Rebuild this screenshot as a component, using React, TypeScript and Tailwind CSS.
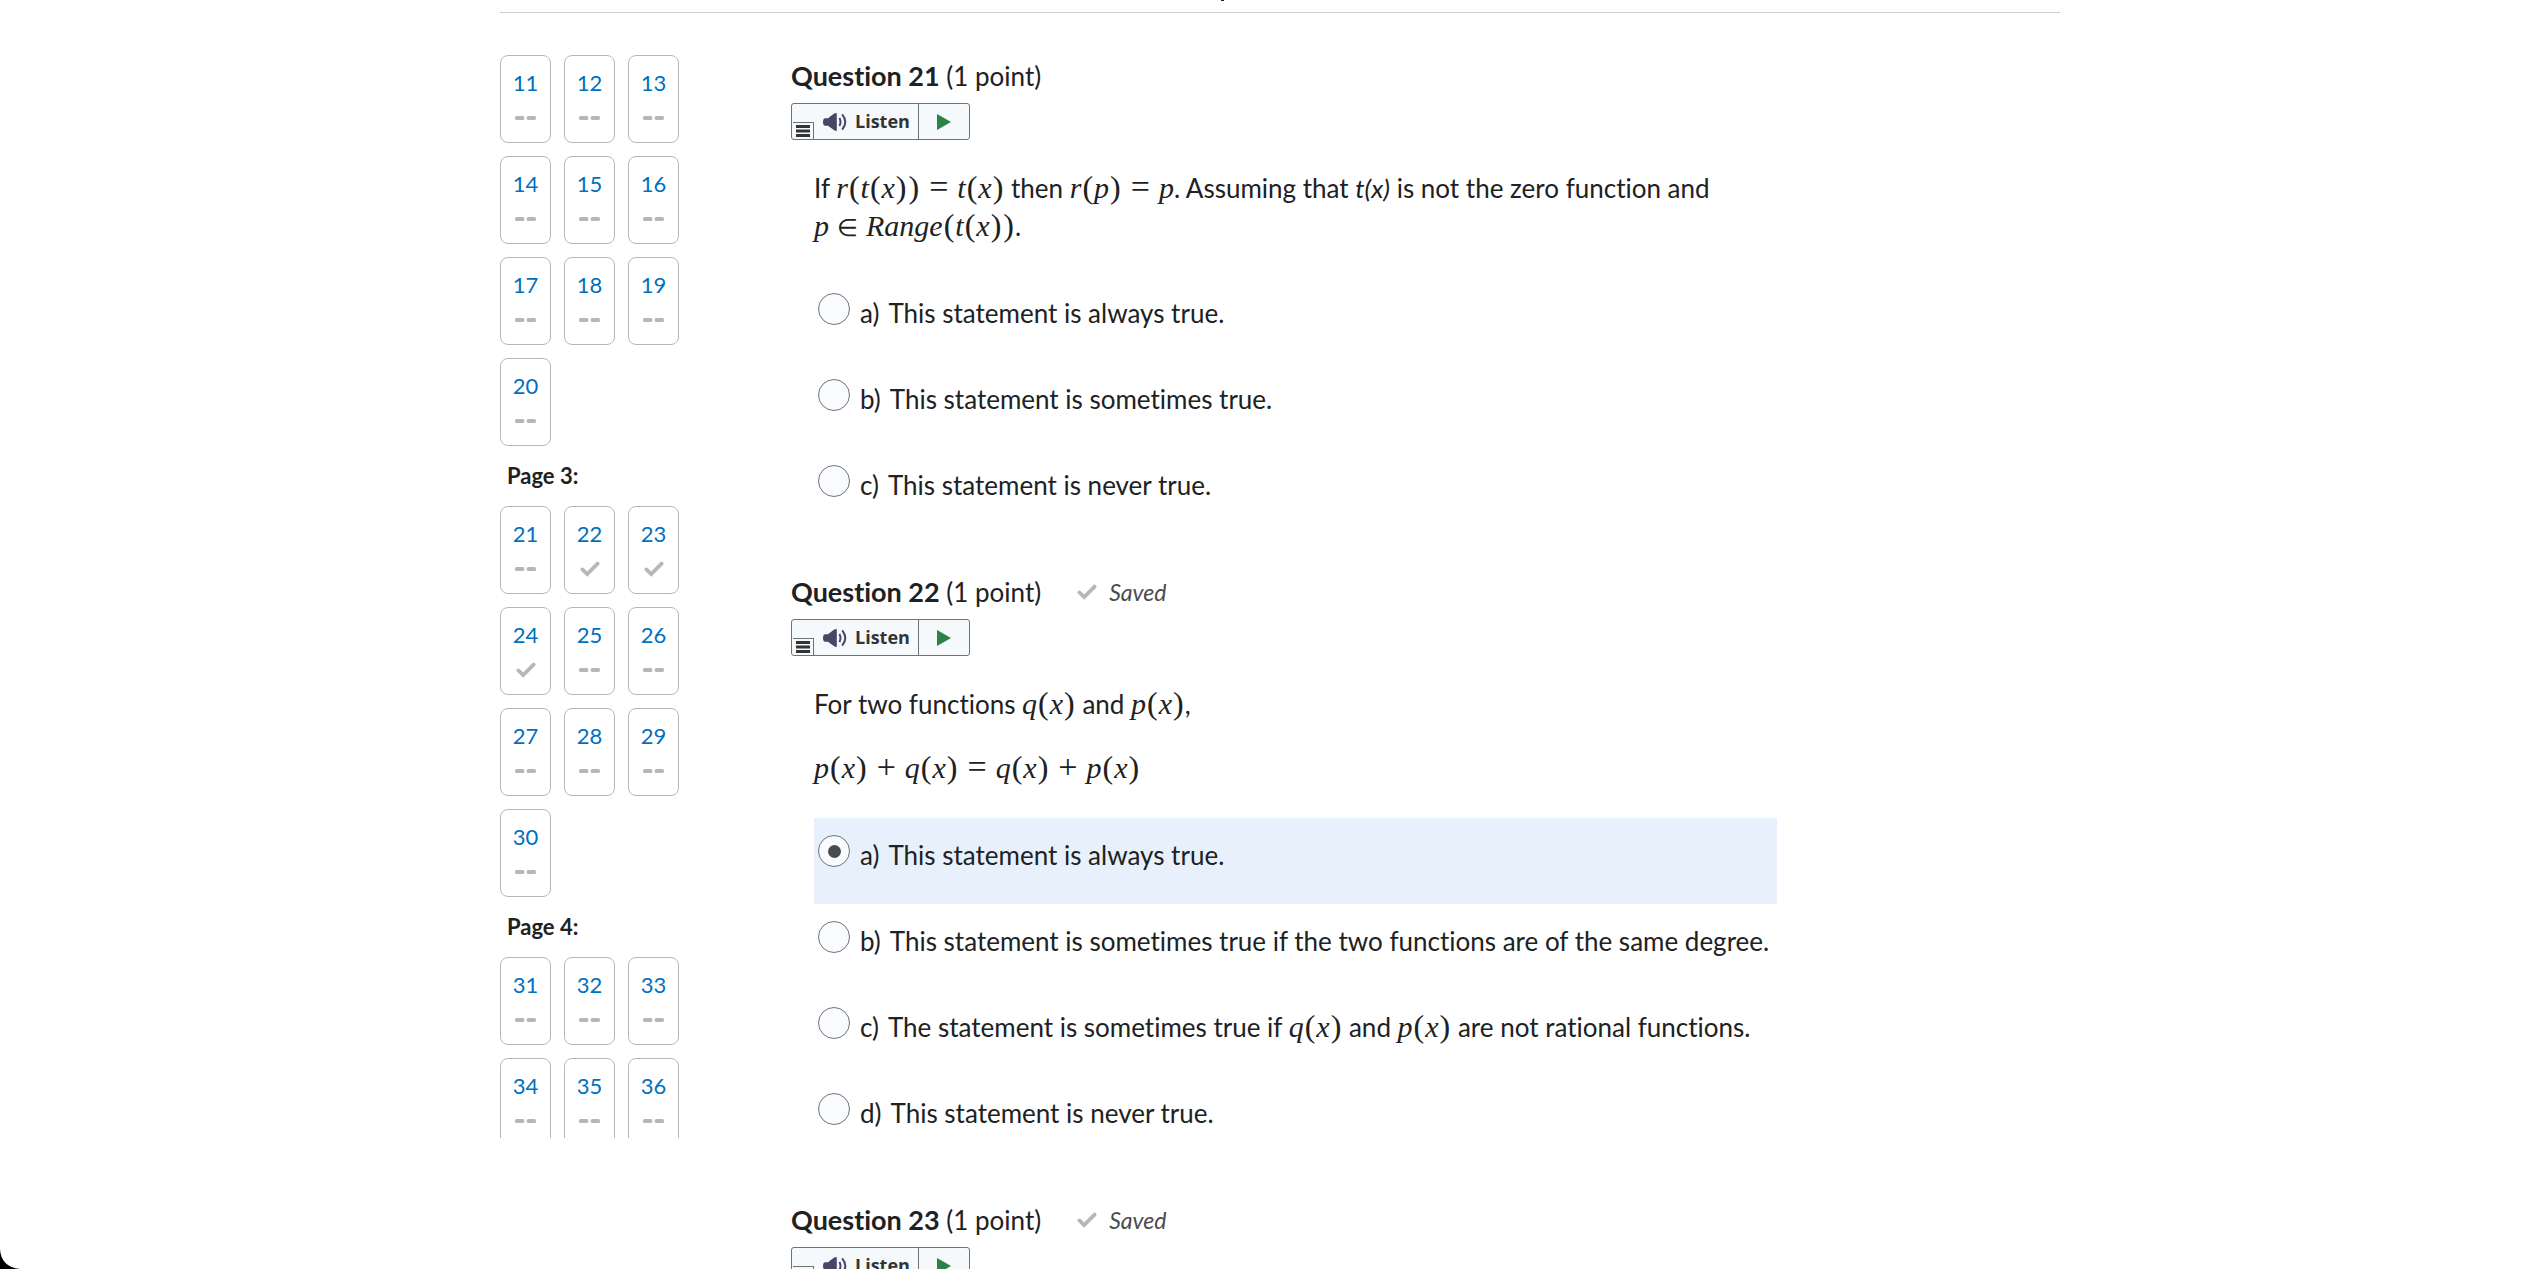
import { useState } from "react";
import type { ReactNode } from "react";

type CellState = "empty" | "saved";

const navSections: { title: string | null; from: number; to: number }[] = [
  { title: null, from: 11, to: 20 },
  { title: "Page 3:", from: 21, to: 30 },
  { title: "Page 4:", from: 31, to: 36 },
];

const savedQuestions = [22, 23, 24];

function CheckIcon({ className }: { className?: string }) {
  return (
    <svg viewBox="0 0 20 16" className={className} aria-hidden="true">
      <path
        d="M2.4 8.4 7.2 13 17.6 2.6"
        fill="none"
        stroke="#b1b9be"
        strokeWidth="3.8"
        strokeLinecap="round"
      />
    </svg>
  );
}

function DashIcon() {
  return (
    <svg viewBox="0 0 21 4" className="h-1 w-[21px]" aria-hidden="true">
      <rect x="0" y="0" width="9.3" height="4" rx="1.5" fill="#b1b9be" />
      <rect x="11.7" y="0" width="9.3" height="4" rx="1.5" fill="#b1b9be" />
    </svg>
  );
}

function NavCell({ number, state }: { number: number; state: CellState }) {
  return (
    <a
      href={`#question-${number}`}
      className="flex h-[88px] flex-col items-center rounded-lg border border-[#b1b9be] bg-white pt-[15px] text-[22px] leading-6 text-[#006fbf]"
    >
      {number}
      <span className="mt-[13px] flex h-5 items-center">
        {state === "saved" ? <CheckIcon className="h-4 w-5" /> : <DashIcon />}
      </span>
    </a>
  );
}

function QuestionNav() {
  return (
    <nav className="h-[calc(100vh-144px)] w-[179px] shrink-0 overflow-hidden pt-[42px]">
      {navSections.map((section) => (
        <section key={section.from}>
          {section.title && (
            <h2 className="px-[7px] pt-[18px] pb-[18px] text-[22px] leading-6 font-bold">
              {section.title}
            </h2>
          )}
          <div className="grid grid-cols-3 gap-[13px]">
            {Array.from({ length: section.to - section.from + 1 }, (_, i) => section.from + i).map(
              (n) => (
                <NavCell key={n} number={n} state={savedQuestions.includes(n) ? "saved" : "empty"} />
              ),
            )}
          </div>
        </section>
      ))}
    </nav>
  );
}

// Letters are set in italics, brackets upright, relations get wider gaps
function Formula({ children }: { children: string }) {
  return (
    <span className="font-['Liberation_Serif',serif] text-[30px] leading-none whitespace-nowrap">
      {children.split(/([()]|\s*[=+∈]\s*)/).map((part, i) => {
        if (!part) return null;
        if (part === "(" || part === ")")
          return (
            <span key={i} className="px-px text-[32px]">
              {part}
            </span>
          );
        if (part.trim() === "∈")
          return (
            <span key={i} className="px-2 text-[24px] leading-none">
              ∈
            </span>
          );
        if (/[=+]/.test(part))
          return (
            <span key={i} className="px-[9px] text-[34px] leading-0">
              {part.trim()}
            </span>
          );
        return <i key={i}>{part}</i>;
      })}
    </span>
  );
}

function ListenBar() {
  return (
    <div className="flex h-[37px] w-[179px] rounded-[3px] border border-[#6e7376] bg-[#f5f9fc] font-['Open_Sans','Noto_Sans',sans-serif]">
      <button
        type="button"
        aria-label="Reader menu"
        className="ml-px flex h-[17px] w-[21px] items-center justify-center self-end border-t border-r border-[#6e7376]"
      >
        <svg viewBox="0 0 14 12" className="h-3 w-3.5" aria-hidden="true">
          <path d="M0 1.5H14M0 6H14M0 10.5H14" stroke="#333" strokeWidth="2.8" />
        </svg>
      </button>
      <button
        type="button"
        className="flex flex-1 items-center gap-2 border-r border-[#6e7376] pl-[9px] text-[18px] font-bold text-[#333]"
      >
        <svg viewBox="0 0 24 18" className="h-[18px] w-6" aria-hidden="true">
          <path
            d="M2.2 5.2H5L11.2.6Q12.3 0 13.8 0V18Q12.3 18 11.2 17.2L5 12.8H2.2Q0 12.6 0 9T2.2 5.2Z"
            fill="#484565"
          />
          <path
            d="M16.4 5Q18.6 9 16.4 13M19.2 1.4Q25.4 9 19.2 16.6"
            fill="none"
            stroke="#484565"
            strokeWidth="2"
          />
        </svg>
        Listen
      </button>
      <button type="button" aria-label="Play" className="flex w-[50px] items-center justify-center">
        <svg viewBox="0 0 14 16" className="h-4 w-3.5" aria-hidden="true">
          <path d="M0 0 14 8 0 16Z" fill="#2c8246" />
        </svg>
      </button>
    </div>
  );
}

function Question({
  number,
  saved,
  children,
}: {
  number: number;
  saved?: boolean;
  children?: ReactNode;
}) {
  return (
    <article id={`question-${number}`} className="mb-[42px]">
      <div className="mb-[11px] flex h-8 items-center">
        <h2 className="text-[26px] leading-8">
          <strong className="text-[27px] font-bold">Question {number}</strong> (1 point)
        </h2>
        {saved && (
          <span className="ml-9 flex items-center gap-3 text-[23px] text-[#494c4e] italic">
            <CheckIcon className="h-4 w-5" />
            Saved
          </span>
        )}
      </div>
      <ListenBar />
      {children && (
        <div className="mt-[29px] ml-[23px] w-fit max-w-[964px] text-[26px] leading-[38px]">
          {children}
        </div>
      )}
    </article>
  );
}

function Options({
  name,
  items,
  initial = null,
}: {
  name: string;
  items: ReactNode[];
  initial?: number | null;
}) {
  const [selected, setSelected] = useState<number | null>(initial);

  return (
    <div className="mt-[31px]">
      {items.map((item, i) => (
        <label
          key={i}
          className={`flex h-[86px] items-start pt-[17px] pr-2 pl-1 ${
            selected === i ? "bg-[#e8f0fc]" : ""
          }`}
        >
          <input
            type="radio"
            name={name}
            checked={selected === i}
            onChange={() => setSelected(i)}
            className="flex size-8 shrink-0 appearance-none items-center justify-center rounded-full border border-[#6e7376] bg-[#f9fbff] before:size-[13px] before:rounded-full checked:before:bg-[#494c4e]"
          />
          <span className="mt-px ml-2.5 flex gap-[9px]">
            <span>{"abcd"[i]})</span>
            <span>{item}</span>
          </span>
        </label>
      ))}
    </div>
  );
}

export default function App() {
  return (
    <div className="relative h-screen overflow-hidden bg-white pl-[35px] font-[Lato,sans-serif] text-[#202122] [font-variant-ligatures:no-common-ligatures]">
      <div className="mx-auto max-w-[1560px]">
        <header className="flex h-[13px] items-start justify-center border-b border-[#c6d0d8]">
          <span className="mr-[115px] h-px w-[3px] bg-[#202122]" />
        </header>
        <div className="flex">
          <QuestionNav />
          <main className="min-w-0 flex-1 pt-[47px] pl-28">
            <Question number={21}>
              <p>
                If <Formula>r(t(x)) = t(x)</Formula> then <Formula>r(p) = p</Formula>. Assuming that{" "}
                <i>t(x)</i> is not the zero function and <Formula>p ∈ Range(t(x))</Formula>.
              </p>
              <Options
                name="q21"
                items={[
                  "This statement is always true.",
                  "This statement is sometimes true.",
                  "This statement is never true.",
                ]}
              />
            </Question>

            <Question number={22} saved>
              <p>
                For two functions <Formula>q(x)</Formula> and <Formula>p(x)</Formula>,
              </p>
              <p className="mt-[26px]">
                <Formula>p(x) + q(x) = q(x) + p(x)</Formula>
              </p>
              <Options
                name="q22"
                initial={0}
                items={[
                  "This statement is always true.",
                  "This statement is sometimes true if the two functions are of the same degree.",
                  <>
                    The statement is sometimes true if <Formula>q(x)</Formula> and{" "}
                    <Formula>p(x)</Formula> are not rational functions.
                  </>,
                  "This statement is never true.",
                ]}
              />
            </Question>

            <Question number={23} saved />
          </main>
        </div>
      </div>

      {/* rounded window corner */}
      <svg viewBox="0 0 20 20" className="absolute bottom-0 left-0 size-5" aria-hidden="true">
        <path d="M0 0Q1 18 20 20H0Z" fill="#000" />
      </svg>
    </div>
  );
}
